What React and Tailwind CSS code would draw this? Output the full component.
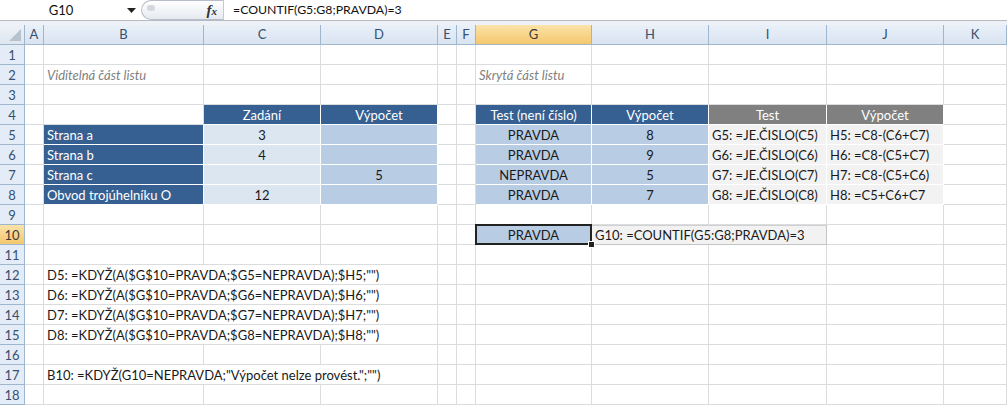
import React from 'react';

const COLS = ['A', 'B', 'C', 'D', 'E', 'F', 'G', 'H', 'I', 'J', 'K'];
const GRID = 'grid grid-cols-[25px_19px_160px_117px_117px_19px_19px_116px_117px_118px_117px_1fr]';

const DARK = 'bg-[#366092] text-white';
const LIGHT = 'bg-[#dce6f1]';
const MID = 'bg-[#b8cce4]';
const GREY = 'bg-[#f2f2f2]';
const GREYHEAD = 'bg-[#808080] text-white';
const NOTE = 'italic text-[#7f7f7f]';

// row -> { col: [span class, text, fill, align] }
const sheet = {
  2: { B: ['', 'Viditelná část listu', null, NOTE], G: ['', 'Skrytá část listu', null, NOTE] },
  4: {
    C: ['', 'Zadání', DARK, 'justify-center'],
    D: ['', 'Výpočet', DARK, 'justify-center'],
    G: ['', 'Test (není číslo)', DARK, 'justify-center'],
    H: ['', 'Výpočet', DARK, 'justify-center'],
    I: ['', 'Test', GREYHEAD, 'justify-center'],
    J: ['', 'Výpočet', GREYHEAD, 'justify-center'],
  },
  5: {
    B: ['', 'Strana a', DARK, ''],
    C: ['', '3', LIGHT, 'justify-center'],
    D: ['', '', MID, 'justify-center'],
    G: ['', 'PRAVDA', MID, 'justify-center'],
    H: ['', '8', MID, 'justify-center'],
    I: ['', 'G5: =JE.ČISLO(C5)', GREY, ''],
    J: ['', 'H5: =C8-(C6+C7)', GREY, ''],
  },
  6: {
    B: ['', 'Strana b', DARK, ''],
    C: ['', '4', LIGHT, 'justify-center'],
    D: ['', '', MID, 'justify-center'],
    G: ['', 'PRAVDA', MID, 'justify-center'],
    H: ['', '9', MID, 'justify-center'],
    I: ['', 'G6: =JE.ČISLO(C6)', GREY, ''],
    J: ['', 'H6: =C8-(C5+C7)', GREY, ''],
  },
  7: {
    B: ['', 'Strana c', DARK, ''],
    C: ['', '', LIGHT, 'justify-center'],
    D: ['', '5', MID, 'justify-center'],
    G: ['', 'NEPRAVDA', MID, 'justify-center'],
    H: ['', '5', MID, 'justify-center'],
    I: ['', 'G7: =JE.ČISLO(C7)', GREY, ''],
    J: ['', 'H7: =C8-(C5+C6)', GREY, ''],
  },
  8: {
    B: ['', 'Obvod trojúhelníku O', DARK, ''],
    C: ['', '12', LIGHT, 'justify-center'],
    D: ['', '', MID, 'justify-center'],
    G: ['', 'PRAVDA', MID, 'justify-center'],
    H: ['', '7', MID, 'justify-center'],
    I: ['', 'G8: =JE.ČISLO(C8)', GREY, ''],
    J: ['', 'H8: =C5+C6+C7', GREY, ''],
  },
  12: { B: ['col-span-3', 'D5: =KDYŽ(A($G$10=PRAVDA;$G5=NEPRAVDA);$H5;"")', null, ''] },
  13: { B: ['col-span-3', 'D6: =KDYŽ(A($G$10=PRAVDA;$G6=NEPRAVDA);$H6;"")', null, ''] },
  14: { B: ['col-span-3', 'D7: =KDYŽ(A($G$10=PRAVDA;$G7=NEPRAVDA);$H7;"")', null, ''] },
  15: { B: ['col-span-3', 'D8: =KDYŽ(A($G$10=PRAVDA;$G8=NEPRAVDA);$H8;"")', null, ''] },
  17: { B: ['col-span-3', 'B10: =KDYŽ(G10=NEPRAVDA;"Výpočet nelze provést.";"")', null, ''] },
};

const spanOf = (s) => (s === 'col-span-2' ? 2 : s === 'col-span-3' ? 3 : 1);

function Cell({ span = '', fill, align = '', children }) {
  const border = fill ? 'border-white' : 'border-[#dadcdd]';
  return (
    <div className={`${span} flex items-center px-[3px] pt-[1px] border-r border-b whitespace-nowrap overflow-hidden ${border} ${fill || 'bg-white'} ${align}`}>
      {children}
    </div>
  );
}

function FormulaBar() {
  return (
    <div className="h-[25px] flex flex-col bg-[#eef2f7]">
      <div className="h-[21px] flex bg-white border-b border-[#b4bbc6]">
        <div className="w-[141px] flex items-center">
          <span className="w-[122px] text-center text-[13px] text-[#111]">G10</span>
          <svg width="9" height="5" viewBox="0 0 9 5" className="ml-[5px]">
            <path d="M0 0 H9 L4.5 5 Z" fill="#222" />
          </svg>
        </div>
        <div className="w-[82px] relative flex items-center justify-end pr-[6px] rounded-l-full border border-r-0 border-[#b7bec8] bg-gradient-to-b from-white to-[#e6eaf0]">
          <span className="absolute left-[5px] top-[4px] w-[8px] h-[6px] rounded-full bg-[#d4d8de]" />
          <span className="font-['Liberation_Serif'] italic font-bold text-[15px] text-[#333] leading-none">
            f<span className="text-[11px]">x</span>
          </span>
        </div>
        <div className="flex-1 flex items-center pl-[9px] border-l border-[#c4cad3] text-[12.3px] text-[#111]">
          =COUNTIF(G5:G8;PRAVDA)=3
        </div>
      </div>
    </div>
  );
}

function HeaderRow() {
  return (
    <div className={`${GRID} h-[20px]`}>
      <div className="relative border-r border-b border-[#9eb6ce] bg-gradient-to-b from-[#eef2f7] to-[#dfe6ef]">
        <svg width="12" height="12" viewBox="0 0 12 12" className="absolute right-[3px] bottom-[3px]">
          <path d="M12 0 V12 H0 Z" fill="#b7c2cf" />
        </svg>
      </div>
      {COLS.map((c) => (
        <div
          key={c}
          className={`flex items-center justify-center border-r border-b border-[#9eb6ce] ${
            c === 'G'
              ? 'bg-gradient-to-b from-[#fbe3a9] to-[#f4c76b] text-[#3b3b3b]'
              : 'bg-gradient-to-b from-[#e9f0f9] to-[#d9e4f1] text-[#36506f]'
          }`}
        >
          {c}
        </div>
      ))}
    </div>
  );
}

function Row({ n }) {
  const spec = sheet[n] || {};
  const cells = [];
  for (let i = 0; i < COLS.length; i++) {
    const c = COLS[i];
    if (n === 10 && c === 'G') {
      cells.push(
        <div key={c} className="relative flex items-center justify-center pt-[1px] bg-[#b8cce4] border-r border-b border-white">
          PRAVDA
          <span className="absolute -left-[1px] -top-[1px] -right-[1px] -bottom-[1px] border-2 border-[#222]" />
          <span className="absolute -right-[4px] -bottom-[4px] w-[7px] h-[7px] bg-[#222] border border-white" />
        </div>
      );
      continue;
    }
    if (n === 10 && c === 'H') {
      cells.push(
        <div key={c} className="col-span-2 flex items-center pl-[3px] pt-[1px] bg-[#f2f2f2] border border-l-0 border-t-[#d0d0d0] border-r-[#c4c4c4] border-b-[#c4c4c4] whitespace-nowrap">
          G10: =COUNTIF(G5:G8;PRAVDA)=3
        </div>
      );
      i += 1;
      continue;
    }
    const s = spec[c];
    if (s) {
      cells.push(
        <Cell key={c} span={s[0]} fill={s[2]} align={s[3]}>
          {s[1]}
        </Cell>
      );
      i += spanOf(s[0]) - 1;
    } else {
      cells.push(<Cell key={c} />);
    }
  }
  return (
    <div className={`${GRID} h-[20px]`}>
      <div
        className={`flex items-center justify-center pt-[1px] border-r border-b border-[#9eb6ce] ${
          n === 10 ? 'bg-gradient-to-b from-[#fbe3a9] to-[#f4c76b] text-[#3b3b3b]' : 'bg-[#e4ecf7] text-[#36506f]'
        }`}
      >
        {n}
      </div>
      {cells}
    </div>
  );
}

export default function App() {
  const rowNums = Array.from({ length: 18 }, (_, i) => i + 1);
  return (
    <div className="w-[1007px] h-[405px] overflow-hidden bg-white font-['Lato',sans-serif] text-[13px] leading-none text-[#1a1a1a]">
      <FormulaBar />
      <HeaderRow />
      {rowNums.map((n) => (
        <Row key={n} n={n} />
      ))}
    </div>
  );
}
